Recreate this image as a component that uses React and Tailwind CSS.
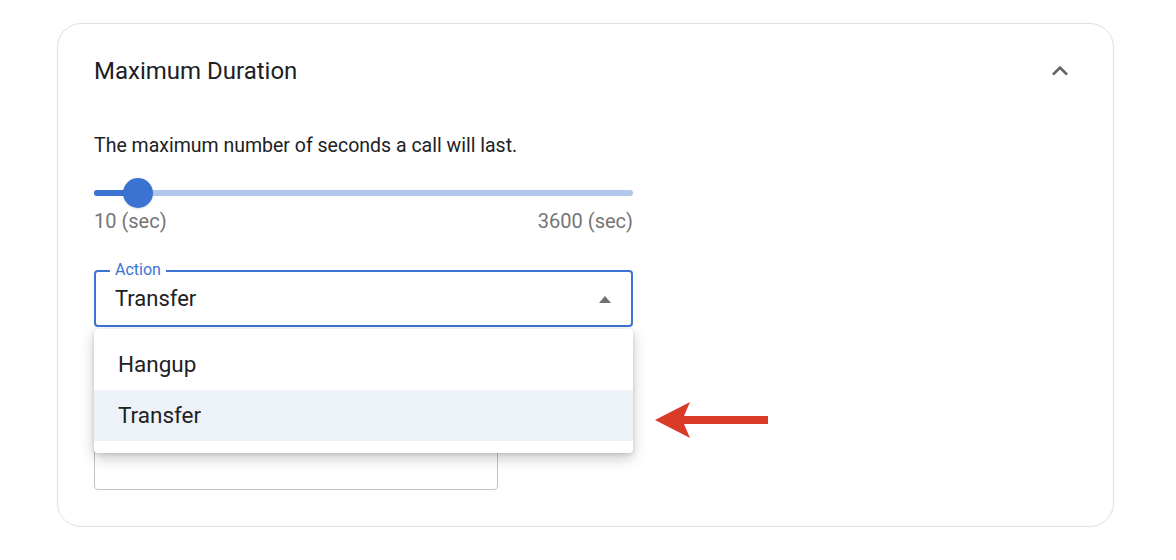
import { useState } from "react";

function ChevronUp() {
  return (
    <svg width="32" height="32" viewBox="0 0 24 24" className="text-[#5f6368]">
      <path d="M7.41 15.41 12 10.83l4.59 4.58L18 14l-6-6-6 6z" fill="currentColor" />
    </svg>
  );
}

function Slider({ value, min, max }) {
  const pct = ((value - min) / (max - min)) * 100;
  return (
    <div className="relative h-[30px] w-full">
      <div className="absolute left-0 right-0 top-[12px] h-[6px] rounded-full bg-[#b1c8ec]" />
      <div
        className="absolute left-0 top-[12px] h-[6px] rounded-full bg-[#3b73d2]"
        style={{ width: `calc(${pct}% + 44px)` }}
      />
      <div
        className="absolute top-0 h-[30px] w-[30px] rounded-full bg-[#3b73d2] shadow-sm"
        style={{ left: `calc(${pct}% + 29px)` }}
      />
    </div>
  );
}

export default function App() {
  const [action] = useState("Transfer");
  const options = ["Hangup", "Transfer"];

  return (
    <div className="h-[560px] w-[1176px] bg-white pl-[57px] pt-[23px] font-['Roboto',sans-serif] text-[#202124]">
      <div className="relative h-[504px] w-[1057px] rounded-[24px] border border-[#e0e0e0] pl-[36px] pr-[37px] pt-[31px]">
        <div className="flex items-center justify-between">
          <h2 className="text-[24px] leading-[32px]">Maximum Duration</h2>
          <ChevronUp />
        </div>

        <div className="w-[539px]">
          <p className="mt-[47px] text-[19.5px] leading-[24px]">
            The maximum number of seconds a call will last.
          </p>

          <div className="mt-[20px]">
            <Slider value={10} min={10} max={3600} />
          </div>
          <div className="mt-[3px] flex justify-between text-[20px] leading-[20px] text-[#757575]">
            <span>10 (sec)</span>
            <span>3600 (sec)</span>
          </div>

          <div className="relative mt-[39px]">
            <div className="relative flex h-[57px] items-center rounded-[4px] border-2 border-[#3b74d4] pl-[19px] pr-[20px]">
              <span className="absolute left-[14px] top-[-12px] bg-white px-[5px] text-[16px] leading-[20px] text-[#3b74d4]">
                Action
              </span>
              <span className="flex-1 text-[22px] leading-[26px]">{action}</span>
              <svg width="16" height="10" viewBox="0 0 16 10" className="mr-[-2px]">
                <path d="M2 9 8 2l6 7z" fill="#707070" />
              </svg>
            </div>

            <div className="absolute left-0 right-0 top-[59px] z-10 rounded-[4px] bg-white pb-[12px] pt-[10px] shadow-[0_5px_14px_rgba(0,0,0,0.22),0_1px_4px_rgba(0,0,0,0.12)]">
              {options.map((o) => (
                <div
                  key={o}
                  className={
                    "flex h-[51px] items-center pl-[24px] text-[22.5px] " +
                    (o === action ? "bg-[#edf2f9]" : "")
                  }
                >
                  {o}
                </div>
              ))}
            </div>
          </div>

          <div className="mt-[113px] h-[50px] w-[404px] rounded-[4px] border border-[#c4c4c4]" />
        </div>

        <svg
          className="absolute left-[597px] top-[377px]"
          width="116"
          height="38"
          viewBox="654 401 116 38"
        >
          <polygon
            points="654,420 689,402 683,416 767,416 767,424 683,424 689,438"
            fill="#da3a28"
          />
        </svg>
      </div>
    </div>
  );
}
